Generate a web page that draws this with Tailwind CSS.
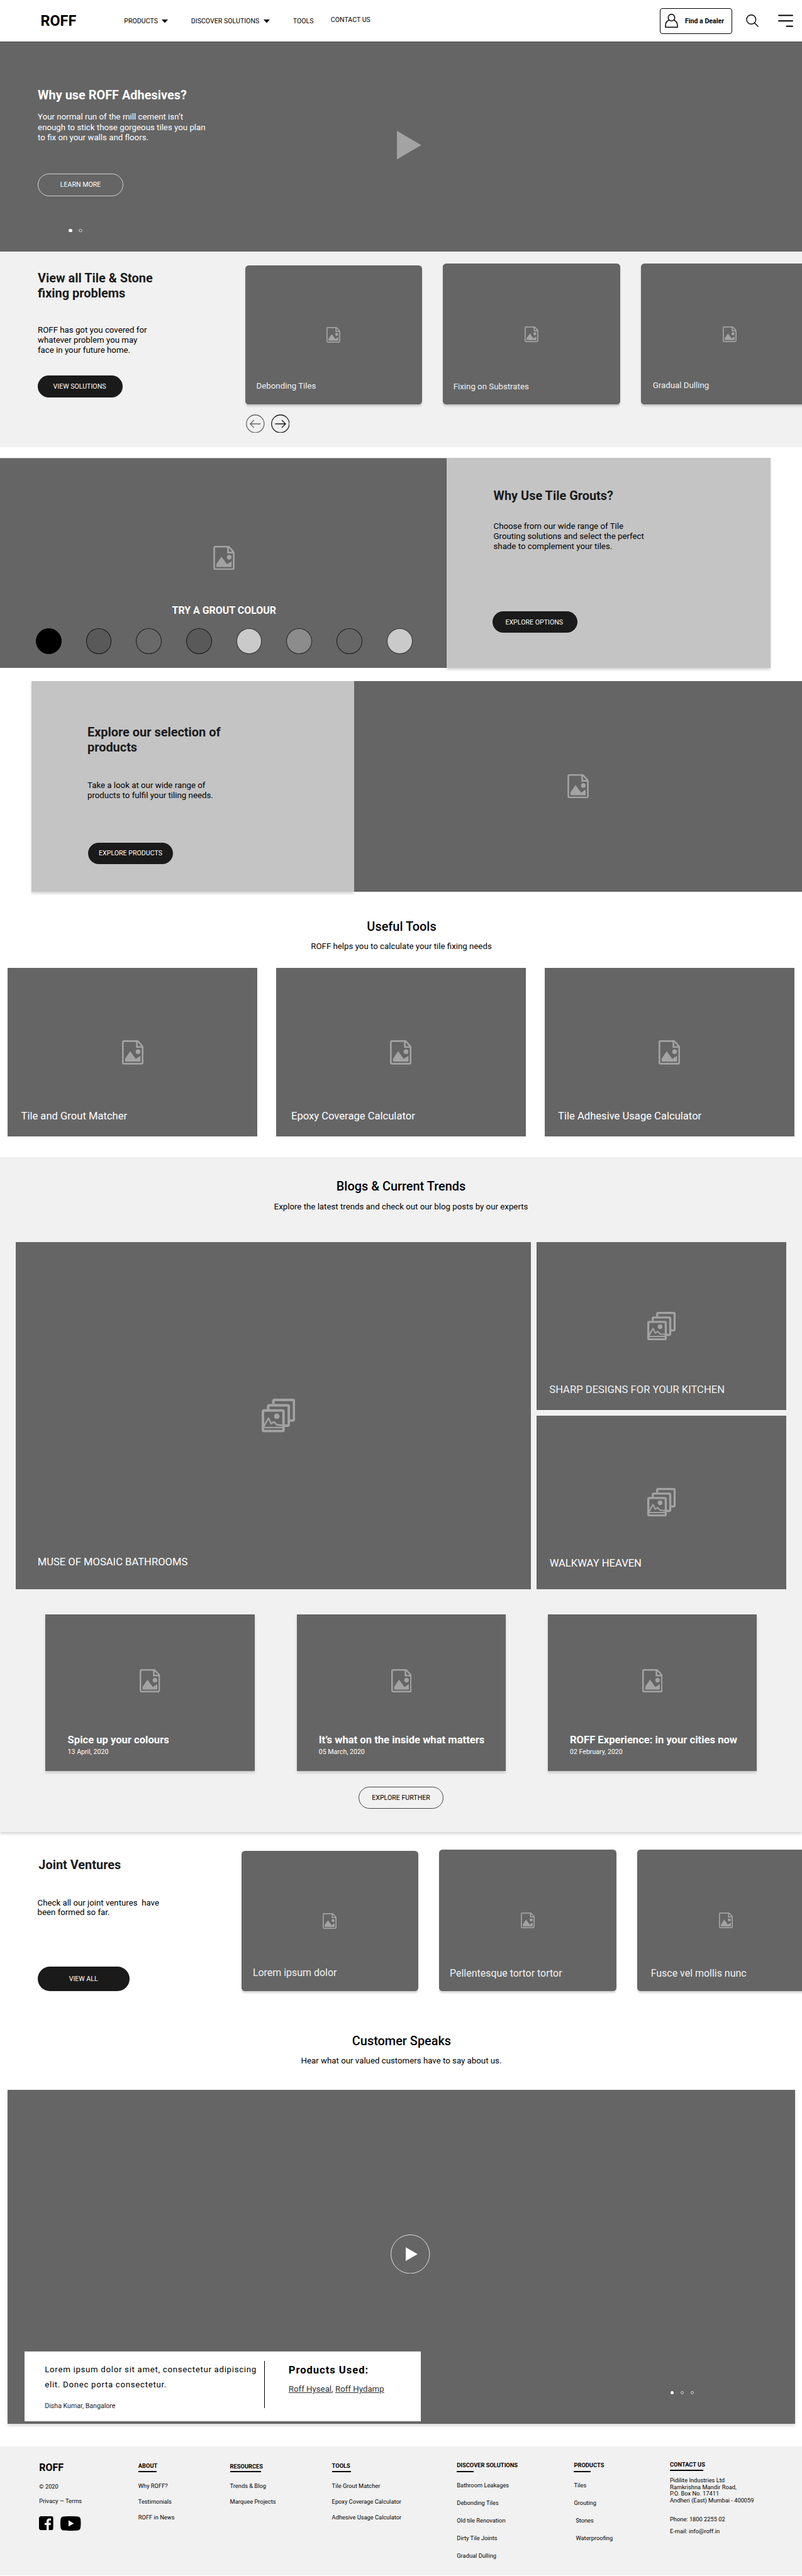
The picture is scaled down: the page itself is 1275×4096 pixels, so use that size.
<!DOCTYPE html>
<html lang="en">
<head>
<meta charset="utf-8">
<title>ROFF</title>
<script src="https://cdn.jsdelivr.net/npm/@tailwindcss/browser@4"></script>
</head>
<body class="w-[1275px] h-[4096px] overflow-hidden bg-white font-[Roboto,sans-serif] text-[13.28px] text-black whitespace-nowrap">

<svg class="hidden">
  <symbol id="file" viewBox="0 0 51.4 58.6">
    <path d="M35.8 2H5a3 3 0 0 0-3 3v48.4a3 3 0 0 0 3 3h41.4a3 3 0 0 0 3-3V17.6c0-2-.6-3.2-1.8-4.6L39 3.600C38 2.500 37.200 2 35.800 2zM35.600 2v14.200h13.600" fill="none" stroke="#a3a3a3" stroke-width="4"/>
    <path d="M7.400 51.200V44l12.200-17.800L33 44.800l11.200-7.500v13.900z" fill="#a3a3a3"/>
    <circle cx="38.400" cy="27.600" r="5.700" fill="#a3a3a3"/>
  </symbol>
  <symbol id="gallery" viewBox="0 0 81 81">
    <g fill="none" stroke="#a3a3a3" stroke-width="6">
      <rect x="3" y="28.300" width="49.400" height="49.400" rx="3"/>
      <path d="M15.600 26v-7.300a3 3 0 0 1 3-3h43.400a3 3 0 0 1 3 3v43.300a3 3 0 0 1-3 3h-7"/>
      <path d="M28 13V6a3 3 0 0 1 3-3h43.600a3 3 0 0 1 3 3v43.300a3 3 0 0 1-3 3h-7"/>
      <path d="M5 66.500 16.300 47l6.700 13 6.500-4.500 7 7.300L53 64" stroke-width="3.800" stroke-linejoin="round"/>
      <path d="M5 69.300h45" stroke-width="3.400"/>
    </g>
    <circle cx="36.300" cy="42" r="6.700" fill="#a3a3a3"/>
  </symbol>
</svg>

<header class="h-[66px] flex items-center text-[10.62px]">
  <div class="w-[197.300px] pl-[64.500px] pb-[1px] text-[23.400px] leading-[28px] font-bold">ROFF</div>
  <div class="w-[106.500px] pt-[1px] flex items-center">PRODUCTS<svg class="ml-[6.500px] w-[10px] h-[5.500px]" viewBox="0 0 10 5.500"><path d="M0 0h10L5 5.500z"/></svg></div>
  <div class="w-[162px] pt-[1px] flex items-center">DISCOVER SOLUTIONS<svg class="ml-[6.700px] w-[10px] h-[5.500px]" viewBox="0 0 10 5.500"><path d="M0 0h10L5 5.500z"/></svg></div>
  <div class="w-[60px] pt-[1px]">TOOLS</div>
  <div class="w-[523.600px] pb-[1.500px]">CONTACT US</div>
  <div class="w-[114.500px] h-[41px] flex items-center border-[1.500px] border-black rounded-[4px] pl-[7px] font-bold">
    <svg class="w-[21px] h-[22px]" viewBox="0 0 21 22" fill="none" stroke="#000" stroke-width="1.500"><ellipse cx="10.500" cy="6" rx="5.200" ry="5.300"/><path d="M6.800 9.800C3 11.500 1 14.800 1 18.500v2.700h19v-2.700c0-3.700-2-7-5.800-8.700"/></svg>
    <span class="ml-[10.500px] pt-[1px]">Find a Dealer</span>
  </div>
  <svg class="ml-[22.500px] w-[20px] h-[20px]" viewBox="0 0 20 20" fill="none" stroke="#000" stroke-width="1.400"><circle cx="8.300" cy="8" r="7.300"/><path d="m13.500 13.300 6 6.200"/></svg>
  <svg class="ml-[30.300px] w-[24px] h-[20px]" viewBox="0 0 24 20" stroke="#000" stroke-width="1.900" stroke-linecap="round"><path d="M1 1.500h22M1 10.300h22M13.500 18.700H23"/></svg>
</header>

<section class="relative h-[334px] bg-[#656565] border-t border-[#555] pl-[60.100px] pt-[73.200px] text-white">
  <h1 class="text-[19.920px] leading-[24px] font-bold">Why use ROFF Adhesives?</h1>
  <p class="mt-[14.300px] leading-[16.050px]">Your normal run of the mill cement isn’t<br>enough to stick those gorgeous tiles you plan<br>to fix on your walls and floors.</p>
  <div class="mt-[49.700px] w-[136px] h-[35.500px] rounded-full border border-white/70 flex items-center justify-center text-[10.620px]">LEARN MORE</div>
  <div class="mt-[51.800px] ml-[49.400px] flex gap-[10.300px]">
    <i class="size-[5.500px] rounded-full bg-white"></i><i class="size-[5.500px] rounded-full border border-white/70"></i>
  </div>
  <svg class="absolute left-[631px] top-[141px] w-[38.600px] h-[45.600px]" viewBox="0 0 38.600 45.600"><path d="M0 0l38.600 22.800L0 45.600z" fill="#a3a3a3"/></svg>
</section>

<section class="h-[311px] bg-[#f1f1f1] flex overflow-hidden">
  <div class="w-[389.600px] shrink-0 pl-[60px] pt-[31.400px]">
    <h2 class="text-[19.920px] leading-[23.400px] font-bold text-[#1a1a1a]">View all Tile &amp; Stone<br>fixing problems</h2>
    <p class="mt-[38.700px] leading-[16.150px]">ROFF has got you covered for<br>whatever problem you may<br>face in your future home.</p>
    <div class="mt-[32.100px] w-[135px] h-[34.300px] rounded-full bg-[#1a1a1a] text-white text-[10.620px] flex items-center justify-center pr-[2px] pt-[0.500px]">VIEW SOLUTIONS</div>
  </div>
  <div class="shrink-0 pt-[18.900px]">
    <div class="flex items-end gap-[33.500px] text-[#f1f1f1]">
      <div class="relative w-[281.300px] h-[221.900px] rounded-[5.500px] bg-[#656565] shadow-[0_3px_3px_rgba(0,0,0,0.16)] flex items-center justify-center">
        <svg class="w-[21.900px] h-[25px]"><use href="#file"/></svg>
        <span class="absolute left-[18px] bottom-[19.500px] leading-[20px]">Debonding Tiles</span>
      </div>
      <div class="relative w-[281.300px] h-[224.600px] rounded-[5.500px] bg-[#656565] shadow-[0_3px_3px_rgba(0,0,0,0.16)] flex items-center justify-center">
        <svg class="w-[21.900px] h-[25px]"><use href="#file"/></svg>
        <span class="absolute left-[16.300px] bottom-[18.900px] leading-[20px]">Fixing on Substrates</span>
      </div>
      <div class="relative w-[281.300px] h-[224.600px] rounded-[5.500px] bg-[#656565] shadow-[0_3px_3px_rgba(0,0,0,0.16)] flex items-center justify-center">
        <svg class="w-[21.900px] h-[25px]"><use href="#file"/></svg>
        <span class="absolute left-[18.600px] bottom-[20.700px] leading-[20px]">Gradual Dulling</span>
      </div>
    </div>
    <div class="mt-[15.300px] ml-[1.300px] flex gap-[10.100px]">
      <svg class="size-[29.700px]" viewBox="0 0 29.700 29.700" fill="none" stroke="#666" stroke-width="1.300"><circle cx="14.850" cy="14.850" r="14.100"/><path d="M23.500 15H7M12.800 9 6.800 15l6 6"/></svg>
      <svg class="size-[29.700px]" viewBox="0 0 29.700 29.700" fill="none" stroke="#1a1a1a" stroke-width="1.300"><circle cx="14.850" cy="14.850" r="14.100"/><path d="M6.300 15h16.500M17 9l6 6-6 6"/></svg>
    </div>
  </div>
</section>

<section class="mt-[17px] h-[334px] flex">
  <div class="w-[710px] bg-[#656565] border-t border-[#a0a0a0] pl-[2.500px] pt-[138.900px] flex flex-col items-center">
    <svg class="w-[34.100px] h-[38.400px]"><use href="#file"/></svg>
    <div class="mt-[54.700px] text-[15.940px] leading-[20px] font-bold text-white">TRY A GROUT COLOUR</div>
    <div class="mt-[18.100px] flex gap-[39px]">
      <i class="size-[40.700px] rounded-full border border-black bg-black"></i>
      <i class="size-[40.700px] rounded-full border border-black/75 bg-[#595959]"></i>
      <i class="size-[40.700px] rounded-full border border-black/75 bg-[#696969]"></i>
      <i class="size-[40.700px] rounded-full border border-black/75 bg-[#595959]"></i>
      <i class="size-[40.700px] rounded-full border border-black/75 bg-[#cacaca]"></i>
      <i class="size-[40.700px] rounded-full border border-black/75 bg-[#8c8c8c]"></i>
      <i class="size-[40.700px] rounded-full border border-black/75 bg-[#666]"></i>
      <i class="size-[40.700px] rounded-full border border-black/75 bg-[#cacaca]"></i>
    </div>
  </div>
  <div class="w-[515px] bg-[#c4c4c4] shadow-[0_3px_4px_rgba(0,0,0,0.16)] pl-[74.500px] pt-[49.300px]">
    <h2 class="text-[19.920px] leading-[24px] font-bold text-[#1a1a1a]">Why Use Tile Grouts?</h2>
    <p class="mt-[27.500px] leading-[16.050px]">Choose from our wide range of Tile<br>Grouting solutions and select the perfect<br>shade to complement your tiles.</p>
    <div class="mt-[95.200px] -ml-[2px] w-[135.500px] h-[34.300px] rounded-full bg-[#1a1a1a] text-white text-[10.620px] flex items-center justify-center pr-[2px] pt-[0.500px]">EXPLORE OPTIONS</div>
  </div>
</section>

<section class="mt-[21px] h-[334.500px] pl-[50.400px] flex">
  <div class="w-[513px] bg-[#c4c4c4] shadow-[0_3px_4px_rgba(0,0,0,0.16)] pl-[88.600px] pt-[70.400px]">
    <h2 class="text-[19.920px] leading-[23.400px] font-bold text-[#1a1a1a]">Explore our selection of<br>products</h2>
    <p class="mt-[41px] leading-[16.050px]">Take a look at our wide range of<br>products to fulfil your tiling needs.</p>
    <div class="mt-[66.500px] ml-[1px] w-[135px] h-[34.300px] rounded-full bg-[#1a1a1a] text-white text-[10.620px] flex items-center justify-center pt-[0.500px]">EXPLORE PRODUCTS</div>
  </div>
  <div class="relative flex-1 bg-[#656565] flex items-center justify-center"><svg class="w-[34.100px] h-[38.400px]"><use href="#file"/></svg></div>
</section>

<section class="h-[422.500px] pt-[44.600px] px-[12.200px]">
  <h2 class="text-center pl-[2px] text-[19.920px] leading-[24px] font-medium">Useful Tools</h2>
  <p class="mt-[11.200px] text-center leading-[16px] pl-[1px]">ROFF helps you to calculate your tile fixing needs</p>
  <div class="mt-[26.200px] grid grid-cols-[396.800px_396.800px_396.800px] gap-[30px] text-[16.600px] leading-[20px] text-white">
    <div class="relative h-[267.500px] bg-[#656565] flex items-center justify-center"><svg class="w-[34.100px] h-[38.900px]"><use href="#file"/></svg><span class="absolute left-[21.300px] bottom-[22px]">Tile and Grout Matcher</span></div>
    <div class="relative h-[267.500px] bg-[#656565] flex items-center justify-center"><svg class="w-[34.100px] h-[38.900px]"><use href="#file"/></svg><span class="absolute left-[24px] bottom-[22px]">Epoxy Coverage Calculator</span></div>
    <div class="relative h-[267.500px] bg-[#656565] flex items-center justify-center"><svg class="w-[34.100px] h-[38.900px]"><use href="#file"/></svg><span class="absolute left-[21.300px] bottom-[22px]">Tile Adhesive Usage Calculator</span></div>
  </div>
</section>

<section class="h-[1073px] bg-[#f1f1f1] shadow-[0_3px_4px_rgba(0,0,0,0.16)] pt-[34.500px]">
  <h2 class="text-center text-[19.920px] leading-[24px] font-medium">Blogs &amp; Current Trends</h2>
  <p class="mt-[12.300px] text-center leading-[16px]">Explore the latest trends and check out our blog posts by our experts</p>
  <div class="mt-[48.200px] pl-[25.200px] grid grid-cols-[818.800px_396.800px] grid-rows-[267.400px_276.200px] gap-x-[9px] gap-y-[8.600px] text-[16.600px] leading-[20px] text-white">
    <div class="relative row-span-2 bg-[#656565] flex items-center justify-center"><svg class="ml-[16px] size-[53.700px]"><use href="#gallery"/></svg><span class="absolute left-[34.500px] bottom-[33.400px]">MUSE OF MOSAIC BATHROOMS</span></div>
    <div class="relative bg-[#656565] flex items-center justify-center"><svg class="size-[45.500px]"><use href="#gallery"/></svg><span class="absolute left-[20.300px] bottom-[22.400px] text-[#f1f1f1]">SHARP DESIGNS FOR YOUR KITCHEN</span></div>
    <div class="relative bg-[#656565] flex items-center justify-center"><svg class="size-[45.500px]"><use href="#gallery"/></svg><span class="absolute left-[20.700px] bottom-[31.200px]">WALKWAY HEAVEN</span></div>
  </div>
  <div class="mt-[40.100px] pl-[72.400px] flex gap-[66.600px] text-white">
    <div class="w-[332.600px] h-[249px] bg-[#656565] shadow-[0_3px_4px_rgba(0,0,0,0.16)] pt-[86.800px] flex flex-col">
      <svg class="self-center w-[32.600px] h-[37.200px]"><use href="#file"/></svg>
      <div class="mt-[65.600px] pl-[35.200px] text-[16.600px] leading-[20px] font-bold">Spice up your colours</div>
      <div class="mt-[3.500px] pl-[35.200px] text-[10.620px] leading-[12px]">13 April, 2020</div>
    </div>
    <div class="w-[332.600px] h-[249px] bg-[#656565] shadow-[0_3px_4px_rgba(0,0,0,0.16)] pt-[86.800px] flex flex-col">
      <svg class="self-center w-[32.600px] h-[37.200px]"><use href="#file"/></svg>
      <div class="mt-[65.600px] pl-[35.200px] text-[16.600px] leading-[20px] font-bold">It’s what on the inside what matters</div>
      <div class="mt-[3.500px] pl-[35.200px] text-[10.620px] leading-[12px]">05 March, 2020</div>
    </div>
    <div class="w-[332.600px] h-[249px] bg-[#656565] shadow-[0_3px_4px_rgba(0,0,0,0.16)] pt-[86.800px] flex flex-col">
      <svg class="self-center w-[32.600px] h-[37.200px]"><use href="#file"/></svg>
      <div class="mt-[65.600px] pl-[35.200px] text-[16.600px] leading-[20px] font-bold">ROFF Experience: in your cities now</div>
      <div class="mt-[3.500px] pl-[35.200px] text-[10.620px] leading-[12px]">02 February, 2020</div>
    </div>
  </div>
  <div class="mt-[25.100px] mx-auto w-[135px] h-[34.800px] rounded-full border border-[#1a1a1a]/80 text-[10.620px] flex items-center justify-center">EXPLORE FURTHER</div>
</section>

<section class="h-[277px] flex overflow-hidden mt-[4px] -mb-[4px]">
  <div class="w-[383.800px] shrink-0 pl-[60px] pt-[36.500px]">
    <h2 class="pl-[1.300px] text-[19.920px] leading-[24px] font-bold text-[#1a1a1a]">Joint Ventures</h2>
    <p class="mt-[40.100px] -ml-[0.500px] leading-[15.750px]">Check all our joint ventures&nbsp; have<br>been formed so far.</p>
    <div class="mt-[78.400px] -ml-[0.500px] w-[146.400px] h-[39px] rounded-full bg-[#1a1a1a] text-white text-[10.620px] flex items-center justify-center pt-[0.500px]">VIEW ALL</div>
  </div>
  <div class="shrink-0 pt-[23.800px] flex items-start gap-[33.400px] text-[15.940px] leading-[20px] text-[#f1f1f1]">
    <div class="mt-[2.700px] relative w-[281.300px] h-[222.200px] rounded-[5.500px] bg-[#656565] shadow-[0_3px_3px_rgba(0,0,0,0.16)] flex items-center justify-center">
      <svg class="w-[22px] h-[25.100px]"><use href="#file"/></svg>
      <span class="absolute left-[18.100px] bottom-[18.400px]">Lorem ipsum dolor</span>
    </div>
    <div class="relative w-[281.300px] h-[224.900px] rounded-[5.500px] bg-[#656565] shadow-[0_3px_3px_rgba(0,0,0,0.16)] flex items-center justify-center">
      <svg class="w-[22px] h-[25.100px]"><use href="#file"/></svg>
      <span class="absolute left-[16.600px] bottom-[17.600px]">Pellentesque tortor tortor</span>
    </div>
    <div class="relative w-[281.300px] h-[224.900px] rounded-[5.500px] bg-[#656565] shadow-[0_3px_3px_rgba(0,0,0,0.16)] flex items-center justify-center">
      <svg class="w-[22px] h-[25.100px]"><use href="#file"/></svg>
      <span class="absolute left-[21.500px] bottom-[17.600px]">Fusce vel mollis nunc</span>
    </div>
  </div>
</section>

<section class="h-[700px] pt-[44px] px-[12.200px]">
  <h2 class="text-center pl-[2px] text-[19.920px] leading-[24px] font-medium">Customer Speaks</h2>
  <p class="mt-[11.400px] text-center leading-[16px] pl-[1px]">Hear what our valued customers have to say about us.</p>
  <div class="relative mt-[37.200px] w-[1251.400px] h-[531.600px] bg-[#656565] shadow-[0_3px_5px_rgba(0,0,0,0.16)]">
    <svg class="absolute left-[609px] top-[230px] size-[62.500px]" viewBox="0 0 62.500 62.500"><circle cx="31.200" cy="31.200" r="30.700" fill="none" stroke="#fff" stroke-width=".8"/><path d="M24 20.300v21.800l18.800-10.900z" fill="#fff"/></svg>
    <div class="absolute left-[26.800px] top-[416.300px] w-[630.200px] h-[110.900px] bg-white flex">
      <div class="w-[381px] pl-[32.300px] pt-[17px]">
        <p class="leading-[23.900px] tracking-[0.690px]">Lorem ipsum dolor sit amet, consectetur adipiscing<br>elit. Donec porta consectetur.</p>
        <div class="mt-[14.700px] text-[10.620px] leading-[16px] text-[#1a1a1a]">Disha Kumar, Bangalore</div>
      </div>
      <div class="mt-[15.400px] w-px h-[74.600px] bg-black"></div>
      <div class="pl-[37.800px] pt-[20.200px]">
        <div class="text-[16.600px] leading-[20px] font-bold tracking-[0.960px]">Products Used:</div>
        <div class="mt-[11.900px] leading-[16px] text-[#333]"><a class="underline">Roff Hyseal</a>, <a class="underline">Roff Hydamp</a></div>
      </div>
    </div>
    <div class="absolute left-[1053.700px] top-[479.400px] flex gap-[10.500px]">
      <i class="size-[5.400px] rounded-full bg-white"></i><i class="size-[5.400px] rounded-full border border-white/70"></i><i class="size-[5.400px] rounded-full border border-white/70"></i>
    </div>
  </div>
</section>

<footer class="h-[205px] bg-[#f1f1f1] pl-[62.300px] grid grid-cols-[157.500px_145.800px_162px_198.700px_186.200px_152.500px_1fr] text-[9.300px] leading-[12px]">
  <div class="pt-[24px]">
    <div class="text-[16px] leading-[20px] font-bold">ROFF</div>
    <div class="mt-[13.600px]">© 2020</div>
    <div class="mt-[11.500px]">Privacy — Terms</div>
    <div class="mt-[17.600px] flex gap-[11.400px]">
      <svg class="w-[22.600px] h-[22.800px] rounded-[3.500px]" viewBox="0 0 24 24"><path d="M24 0H0v24h12.820v-9.294H9.692v-3.622h3.128V8.413c0-3.100 1.893-4.788 4.659-4.788 1.325 0 2.463.099 2.795.143v3.240l-1.918.001c-1.504 0-1.795.715-1.795 1.763v2.313h3.587l-.467 3.622h-3.120V24H24z"/></svg>
      <svg class="w-[32.500px] h-[22.900px]" viewBox="0 3.545 24 16.910"><path d="M23.498 6.186a3.016 3.016 0 0 0-2.122-2.136C19.505 3.545 12 3.545 12 3.545s-7.505 0-9.377.505A3.017 3.017 0 0 0 .502 6.186C0 8.070 0 12 0 12s0 3.930.502 5.814a3.016 3.016 0 0 0 2.122 2.136c1.871.505 9.376.505 9.376.505s7.505 0 9.377-.505a3.015 3.015 0 0 0 2.122-2.136C24 15.930 24 12 24 12s0-3.930-.502-5.814zM9.545 15.568V8.432L15.818 12l-6.273 3.568z"/></svg>
    </div>
  </div>
  <div class="pt-[25.200px]">
    <h3 class="font-bold">ABOUT</h3>
    <div class="mt-[2.100px] w-[29.700px] h-[1.500px] bg-black"></div>
    <div class="mt-[16.200px] flex flex-col gap-[13.250px]"><span>Why ROFF?</span><span>Testimonials</span><span>ROFF in News</span></div>
  </div>
  <div class="pt-[25.900px]">
    <h3 class="font-bold">RESOURCES</h3>
    <div class="mt-[1.400px] w-[49.600px] h-[1.500px] bg-black"></div>
    <div class="mt-[16.200px] flex flex-col gap-[13.250px]"><span>Trends &amp; Blog</span><span>Marquee Projects</span></div>
  </div>
  <div class="pt-[25.200px]">
    <h3 class="font-bold">TOOLS</h3>
    <div class="mt-[2.100px] w-[30px] h-[1.500px] bg-black"></div>
    <div class="mt-[16.200px] flex flex-col gap-[13.250px]"><span>Tile Grout Matcher</span><span>Epoxy Coverage Calculator</span><span>Adhesive Usage Calculator</span></div>
  </div>
  <div class="pt-[23.900px]">
    <h3 class="font-bold">DISCOVER SOLUTIONS</h3>
    <div class="mt-[3.400px] w-[26.800px] h-[1.500px] bg-black"></div>
    <div class="mt-[14.900px] flex flex-col gap-[16.050px]"><span>Bathroom Leakages</span><span>Debonding Tiles</span><span>Old tile Renovation</span><span>Dirty Tile Joints</span><span>Gradual Dulling</span></div>
  </div>
  <div class="pt-[23.900px]">
    <h3 class="font-bold">PRODUCTS</h3>
    <div class="mt-[3.400px] w-[26.800px] h-[1.500px] bg-black"></div>
    <div class="mt-[14.900px] flex flex-col gap-[16px]"><span>Tiles</span><span>Grouting</span><span class="pl-[2.700px]">Stones</span><span class="pl-[3px]">Waterproofing</span></div>
  </div>
  <div class="pt-[23.200px]">
    <h3 class="font-bold">CONTACT US</h3>
    <div class="mt-[2.100px] w-[53.300px] h-[1.500px] bg-black"></div>
    <p class="mt-[10.400px] leading-[10.620px]">Pidilite Industries Ltd<br>Ramkrishna Mandir Road,<br>P.O. Box No. 17411<br>Andheri (East) Mumbai - 400059</p>
    <div class="mt-[17.900px]">Phone: 1800 2255 02</div>
    <div class="mt-[7.900px]">E-mail: info@roff.in</div>
  </div>
</footer>
</body>
</html>
